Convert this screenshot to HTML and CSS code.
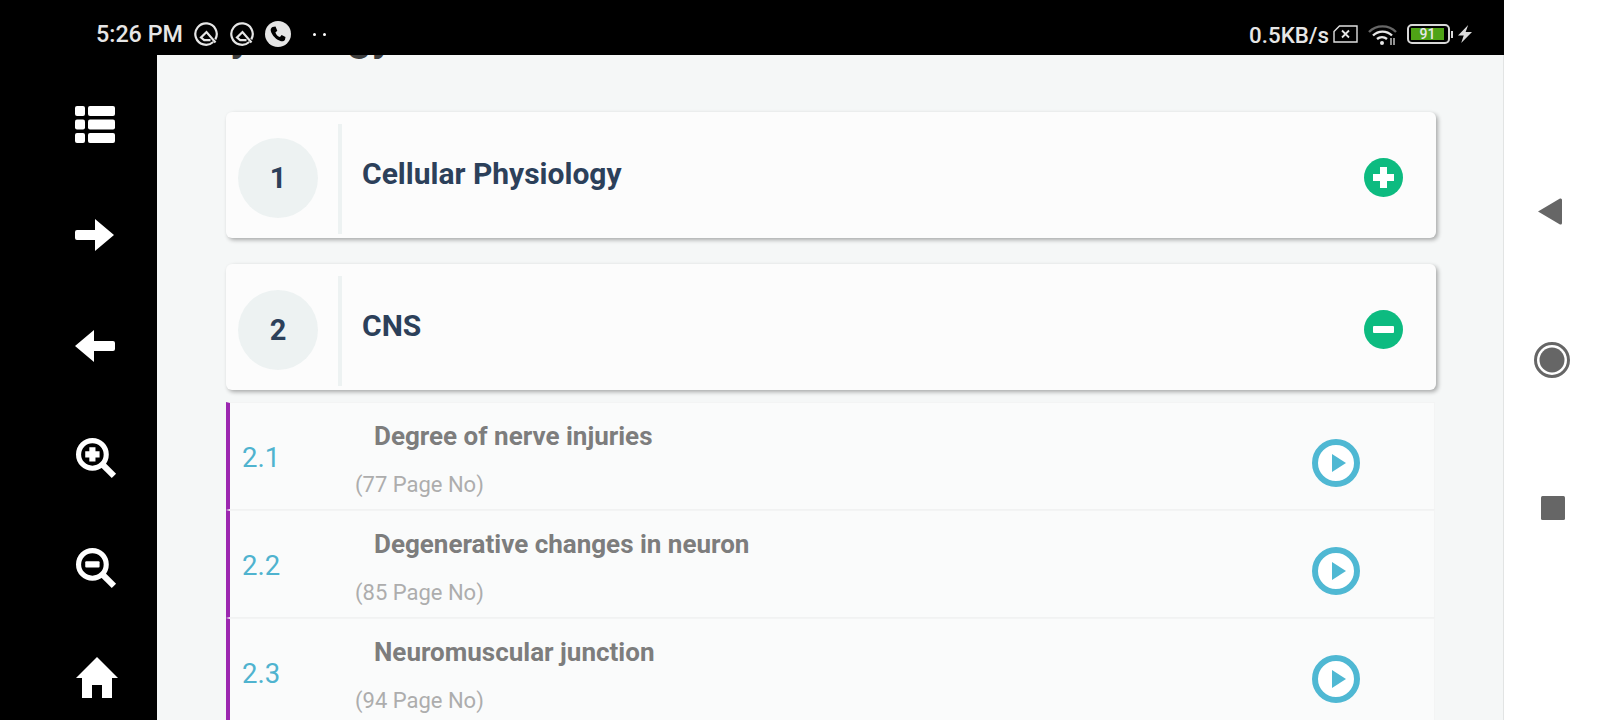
FILE: index.html
```html
<!DOCTYPE html>
<html lang="en">
<head>
<meta charset="utf-8">
<title>Physiology</title>
<link rel="stylesheet" href="styles.css">
</head>
<body>
<div class="screen">
  <div class="app">
    <header class="status">
      <div class="status-left">
        <span class="clock">5:26 PM</span>
        <svg class="ic-q" viewBox="0 0 24 24"><path d="M19.2 20 A10.7 10.7 0 1 1 21.3 17.4" fill="none" stroke="#e6e6e6" stroke-width="2.2"/><path d="M21.5 20.5 L12.5 10 L7 15.5 L10.2 18.2 H16.5" fill="none" stroke="#e6e6e6" stroke-width="2.2"/></svg>
        <svg class="ic-q q2" viewBox="0 0 24 24"><path d="M19.2 20 A10.7 10.7 0 1 1 21.3 17.4" fill="none" stroke="#e6e6e6" stroke-width="2.2"/><path d="M21.5 20.5 L12.5 10 L7 15.5 L10.2 18.2 H16.5" fill="none" stroke="#e6e6e6" stroke-width="2.2"/></svg>
        <svg class="ic-phone" viewBox="0 0 26 26"><circle cx="13" cy="13" r="13" fill="#e6e6e6"/><path d="M7.5 6 L10.5 5.5 L12.3 9.7 L10.4 11.4 C11 13.5 13 15.5 15 16 L16.6 14 L20.5 16 L20 18.8 C19 20.3 17.5 20.6 16 20.2 C11.5 19 7 14.5 5.8 10 C5.4 8.3 6 6.8 7.5 6 Z" fill="#000"/></svg>
        <span class="dots"><i></i><i></i></span>
      </div>
      <div class="status-right">
        <span class="speed">0.5KB/s</span>
        <svg class="ic-sim" viewBox="0 0 25 18"><path d="M6.5 1 H24 V17 H1 V6.5 Z" fill="none" stroke="#e0e0e0" stroke-width="1.4"/><path d="M9 5.5 L16 12.5 M16 5.5 L9 12.5" stroke="#e6e6e6" stroke-width="1.8"/></svg>
        <svg class="ic-wifi" viewBox="0 0 29 21"><path d="M1 8 A19 19 0 0 1 28 8" fill="none" stroke="#666" stroke-width="2.4"/><path d="M5 11.5 A13.5 13.5 0 0 1 24 11.5" fill="none" stroke="#e6e6e6" stroke-width="2.4"/><path d="M9 15 A8 8 0 0 1 19 15" fill="none" stroke="#e6e6e6" stroke-width="2.4"/><circle cx="14" cy="19" r="2" fill="#e6e6e6"/><path d="M23 14 V21 M26 14 V21" stroke="#ddd" stroke-width="1.3"/></svg>
        <span class="battery"><span class="battery-fill">91</span></span><span class="battery-nub"></span>
        <svg class="ic-bolt" viewBox="1 0 11 17" preserveAspectRatio="none"><path d="M9 0 L1 10 H5.5 L3.5 17 L12 6.5 H7 Z" fill="#dcdcdc"/></svg>
      </div>
    </header>
    <div class="body">
      <nav class="rail">
        <svg class="rail-icon" width="40" height="37" viewBox="0 0 40 37"><g fill="#fff"><rect width="10" height="10" rx="2"/><rect x="13" width="27" height="10" rx="2"/><rect y="13.5" width="10" height="10" rx="2"/><rect x="13" y="13.5" width="27" height="10" rx="2"/><rect y="27" width="10" height="10" rx="2"/><rect x="13" y="27" width="27" height="10" rx="2"/></g></svg>
        <svg class="rail-icon" width="40" height="32" viewBox="0 0 40 32"><path d="M2 11 H20 V0 L39 16 L20 32 V21 H2 Q0 21 0 19 V13 Q0 11 2 11 Z" fill="#fff"/></svg>
        <svg class="rail-icon" width="40" height="32" viewBox="0 0 40 32"><path d="M38 11 H19 V0 L0 16 L19 32 V21 H38 Q40 21 40 19 V13 Q40 11 38 11 Z" fill="#fff"/></svg>
        <svg class="rail-icon" width="41" height="41" viewBox="0 0 40 40"><circle cx="16" cy="16" r="13.5" fill="none" stroke="#fff" stroke-width="5"/><path d="M25 25 L37 37" stroke="#fff" stroke-width="6"/><path d="M13 9 H19 V13 H23 V19 H19 V23 H13 V19 H9 V13 H13 Z" fill="#fff"/></svg>
        <svg class="rail-icon" width="41" height="41" viewBox="0 0 40 40"><circle cx="16" cy="16" r="13.5" fill="none" stroke="#fff" stroke-width="5"/><path d="M25 25 L37 37" stroke="#fff" stroke-width="6"/><rect x="9" y="13" width="14" height="6" rx="1" fill="#fff"/></svg>
        <svg class="rail-icon" width="42" height="41" viewBox="0 0 42 41"><path d="M21 0 L42 21 H36 V41 H26 V28 H16 V41 H6 V21 H0 Z" fill="#fff"/></svg>
      </nav>
      <main class="panel">
        <h1 class="page-title">Physiology</h1>
        <section class="card">
          <span class="badge">1</span>
          <span class="rule"></span>
          <h2 class="card-title">Cellular Physiology</h2>
          <svg class="toggle" viewBox="0 0 39 39"><circle cx="19.5" cy="19.5" r="19.5" fill="#0dbb80"/><path d="M16 9 H23 V16 H30 V23 H23 V30 H16 V23 H9 V16 H16 Z" fill="#fff"/></svg>
        </section>
        <section class="card">
          <span class="badge">2</span>
          <span class="rule"></span>
          <h2 class="card-title">CNS</h2>
          <svg class="toggle" viewBox="0 0 39 39"><circle cx="19.5" cy="19.5" r="19.5" fill="#0dbb80"/><rect x="9" y="16" width="21" height="7" rx="1" fill="#fff"/></svg>
        </section>
        <ul class="topics">
          <li class="topic">
            <span class="topic-no">2.1</span>
            <div class="topic-text"><h3 class="topic-title">Degree of nerve injuries</h3><p class="topic-page">(77 Page No)</p></div>
            <svg class="play" viewBox="0 0 48 48"><circle cx="24" cy="24" r="21" fill="#fff" stroke="#4fb8d3" stroke-width="6"/><path d="M20 15 L34 24 L20 33 Z" fill="#4fb8d3"/></svg>
          </li>
          <li class="topic">
            <span class="topic-no">2.2</span>
            <div class="topic-text"><h3 class="topic-title">Degenerative changes in neuron</h3><p class="topic-page">(85 Page No)</p></div>
            <svg class="play" viewBox="0 0 48 48"><circle cx="24" cy="24" r="21" fill="#fff" stroke="#4fb8d3" stroke-width="6"/><path d="M20 15 L34 24 L20 33 Z" fill="#4fb8d3"/></svg>
          </li>
          <li class="topic">
            <span class="topic-no">2.3</span>
            <div class="topic-text"><h3 class="topic-title">Neuromuscular junction</h3><p class="topic-page">(94 Page No)</p></div>
            <svg class="play" viewBox="0 0 48 48"><circle cx="24" cy="24" r="21" fill="#fff" stroke="#4fb8d3" stroke-width="6"/><path d="M20 15 L34 24 L20 33 Z" fill="#4fb8d3"/></svg>
          </li>
        </ul>
      </main>
    </div>
  </div>
  <aside class="softkeys">
    <svg width="24" height="27" viewBox="0 0 24 27"><path d="M0 13.5 L22 0.5 Q24 0 24 2 V25 Q24 27 22 26.5 Z" fill="#666"/></svg>
    <svg width="36" height="36" viewBox="0 0 36 36"><circle cx="18" cy="18" r="16.5" fill="none" stroke="#666" stroke-width="3"/><circle cx="18" cy="18" r="12.5" fill="#666"/></svg>
    <svg width="24" height="24" viewBox="0 0 24 24"><rect width="24" height="24" rx="1.5" fill="#666"/></svg>
  </aside>
</div>
</body>
</html>
```
FILE: styles.css
```css
* { box-sizing: border-box; }
html, body { margin: 0; padding: 0; height: 720px; overflow: hidden; background: #fff; }
body { font-family: Roboto, "Noto Sans", sans-serif; }
.screen { display: flex; width: 1600px; height: 720px; }
.app { width: 1504px; height: 720px; display: flex; flex-direction: column; }
.status { position: relative; z-index: 2; height: 55px; flex: none; background: #000; display: flex; justify-content: space-between; align-items: center; padding: 13px 32px 0 96px; color: #e6e6e6; }
.status-left, .status-right { display: flex; align-items: center; }
.clock { font-size: 23.3px; font-weight: 500; width: 98px; }
.ic-q { width: 24px; height: 24px; }
.q2 { margin-left: 12px; }
.ic-phone { width: 26px; height: 26px; margin-left: 11px; }
.dots { display: flex; gap: 7px; margin-left: 22px; }
.dots i { width: 3px; height: 3px; background: #fff; border-radius: 50%; }
.speed { font-size: 22.3px; font-weight: 500; margin-top: 2px; }
.ic-sim { width: 25px; height: 18px; margin-left: 4px; }
.ic-wifi { width: 29px; height: 21px; margin-left: 10px; }
.battery { margin-left: 10px; width: 43px; height: 20px; border: 2px solid #d8d8d8; border-radius: 5px; padding: 2px; display: flex; }
.battery-fill { width: 33px; background: #4fa316; color: #e8e8e8; font-size: 14px; font-weight: 500; line-height: 12px; text-align: center; }
.battery-nub { width: 2px; height: 7px; margin-left: 1px; background: #d8d8d8; }
.ic-bolt { width: 14px; height: 18px; margin-left: 5px; }
.body { flex: 1; display: flex; min-height: 0; }
.rail { width: 157px; flex: none; background: #000; display: flex; flex-direction: column; align-items: flex-start; padding: 51px 0 0 75px; }
.rail-icon { display: block; flex: none; }
.rail-icon:nth-child(1) { margin-bottom: 76px; }
.rail-icon:nth-child(2) { margin-bottom: 79px; }
.rail-icon:nth-child(3) { margin-bottom: 76px; }
.rail-icon:nth-child(4) { margin-bottom: 69px; margin-left: 1px; }
.rail-icon:nth-child(5) { margin-bottom: 68px; margin-left: 1px; }
.rail-icon:nth-child(6) { margin-left: 1px; }
.panel { flex: 1; background: #f5f7f7; overflow: hidden; padding: 0 67px 0 69px; border-right: 1px solid #e2e4e4; }
.page-title { margin: -42px 0 59px -48px; height: 40px; font-size: 44px; line-height: 44px; font-weight: 500; color: #3c3c3c; white-space: nowrap; }
.card { display: flex; align-items: center; height: 126px; margin-bottom: 26px; padding: 12px 33px 4px 12px; background: #fcfcfc; border-radius: 6px; box-shadow: 2px 2px 4px rgba(0,0,0,.32); }
.card + .topics { margin-top: -14px; }
.badge { width: 80px; height: 80px; flex: none; border-radius: 50%; background: #edf2f2; color: #2c405a; font-size: 29px; font-weight: 700; display: flex; align-items: center; justify-content: center; margin-bottom: 2px; }
.rule { width: 4px; height: 110px; flex: none; background: #edf2f2; margin-left: 20px; }
.card-title { flex: 1; margin: 0 0 10px 20px; font-size: 30px; line-height: 34px; font-weight: 700; color: #2c405a; }
.toggle { width: 39px; height: 39px; flex: none; margin-bottom: 4px; }
.topics { list-style: none; margin: 0; padding: 0; width: 1209px; }
.topic { display: flex; height: 108px; background: #fafbfb; border-left: 4px solid #9c27b0; border-bottom: 1px solid #f1f2f2; border-top: 1px solid #f3f4f4; border-right: 1px solid #f3f4f4; align-items: center; }
.topic-no { width: 125px; padding-left: 12px; margin-top: 2px; font-size: 27.5px; font-weight: 400; color: #4fb3cf; }
.topic-text { flex: 1; margin-top: 6px; }
.topic-title { margin: 0 0 0 19px; font-size: 26px; line-height: 30px; font-weight: 700; color: #7d7d7d; }
.topic-page { margin: 21px 0 0; font-size: 22px; line-height: 26px; color: #adadad; }
.play { width: 48px; height: 48px; flex: none; margin: 14px 74px 0 0; }
.softkeys { flex: 1; background: #fff; display: flex; flex-direction: column; align-items: center; padding-top: 198px; }
.softkeys svg { display: block; flex: none; }
.softkeys svg:nth-child(1) { margin: 0 0 117px -4px; }
.softkeys svg:nth-child(3) { margin-top: 118px; margin-left: 1px; }
```
